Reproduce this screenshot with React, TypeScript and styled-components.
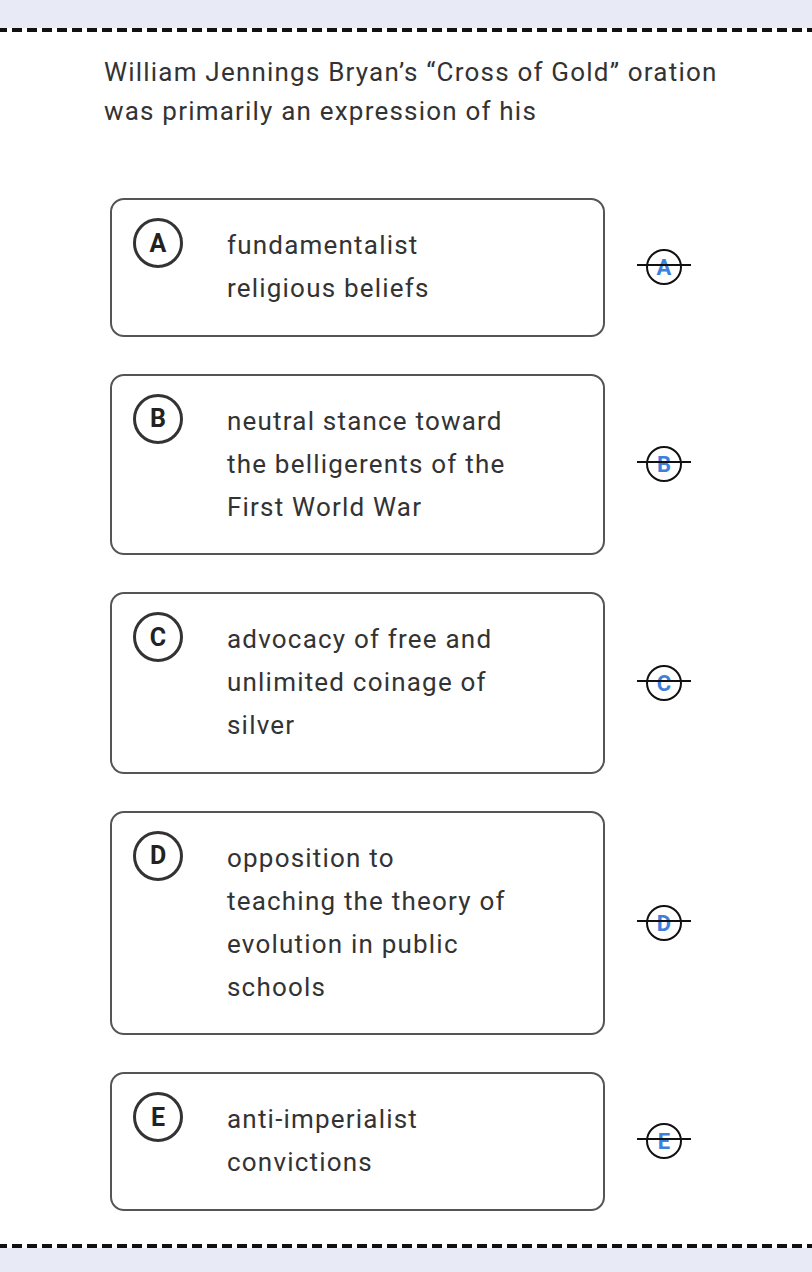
import React from "react";
import styled, { createGlobalStyle } from "styled-components";

const GlobalStyle = createGlobalStyle`
  body {
    margin: 0;
    background: #e8eaf5;
    font-family: Roboto, "Liberation Sans", sans-serif;
  }
`;

interface IOption {
  letter: string;
  lines: string[];
}

const options: IOption[] = [
  { letter: "A", lines: ["fundamentalist", "religious beliefs"] },
  {
    letter: "B",
    lines: ["neutral stance toward", "the belligerents of the", "First World War"],
  },
  {
    letter: "C",
    lines: ["advocacy of free and", "unlimited coinage of", "silver"],
  },
  {
    letter: "D",
    lines: [
      "opposition to",
      "teaching the theory of",
      "evolution in public",
      "schools",
    ],
  },
  { letter: "E", lines: ["anti-imperialist", "convictions"] },
];

function AnswerMark(props: { letter: string }): JSX.Element {
  return (
    <MarkBox>
      <svg width="54" height="38" viewBox="0 0 54 38">
        <circle cx="27" cy="19" r="17" fill="none" stroke="#111" strokeWidth="2" />
        <text
          x="27"
          y="27"
          textAnchor="middle"
          fontFamily="Roboto, 'Liberation Sans', sans-serif"
          fontWeight="700"
          fontSize="22"
          fill="#3f7fdc"
        >
          {props.letter}
        </text>
        <line x1="0" y1="17" x2="54" y2="17" stroke="#111" strokeWidth="2" />
      </svg>
    </MarkBox>
  );
}

export default function App(): JSX.Element {
  return (
    <Page>
      <GlobalStyle />
      <Sheet>
        <Question>
          William Jennings Bryan’s “Cross of Gold” oration
          <br />
          was primarily an expression of his
        </Question>

        <OptionList>
          {options.map((option) => (
            <OptionRow key={option.letter}>
              <OptionCard>
                <LetterBadge>{option.letter}</LetterBadge>
                <OptionText>
                  {option.lines.map((line, i) => (
                    <div key={i}>{line}</div>
                  ))}
                </OptionText>
              </OptionCard>
              <AnswerMark letter={option.letter} />
            </OptionRow>
          ))}
        </OptionList>
      </Sheet>
    </Page>
  );
}

const Page = styled.div`
  min-height: 1272px;
  padding: 28px 0 25px 0;
  box-sizing: border-box;

  background: #e8eaf5;
`;

const Sheet = styled.div`
  position: relative;
  padding: 25px 0 37px 0;

  background: #fff;

  &::before,
  &::after {
    content: "";
    position: absolute;
    left: -3px;
    right: 0;
    height: 4px;
    background: repeating-linear-gradient(
      to right,
      #111 0 10px,
      transparent 10px 15px
    );
  }

  &::before {
    top: 0;
  }

  &::after {
    bottom: 0;
  }
`;

const Question = styled.p`
  margin: 0 0 67px 104px;

  font-size: 26px;
  line-height: 39px;
  letter-spacing: 1.2px;
  color: #333;
`;

const OptionList = styled.div`
  display: flex;
  flex-direction: column;
  gap: 37px;
`;

const OptionRow = styled.div`
  display: flex;
  align-items: center;
  gap: 32px;

  margin-left: 110px;
`;

const OptionCard = styled.div`
  display: flex;
  align-items: flex-start;
  gap: 44px;

  width: 495px;
  padding: 24px 24px 24.5px 21px;
  box-sizing: border-box;
  border: 2px solid #555;
  border-radius: 14px;

  background: #fff;
`;

const LetterBadge = styled.div`
  display: flex;
  align-items: center;
  justify-content: center;
  flex-shrink: 0;

  width: 50px;
  height: 50px;
  margin-top: -6px;
  box-sizing: border-box;
  border: 3px solid #333;
  border-radius: 50%;

  font-size: 25px;
  font-weight: 700;
  color: #222;
`;

const OptionText = styled.div`
  font-size: 26px;
  line-height: 43px;
  letter-spacing: 1.2px;
  color: #333;
  white-space: nowrap;
`;

const MarkBox = styled.div`
  display: flex;
  width: 54px;
  height: 38px;
`;
